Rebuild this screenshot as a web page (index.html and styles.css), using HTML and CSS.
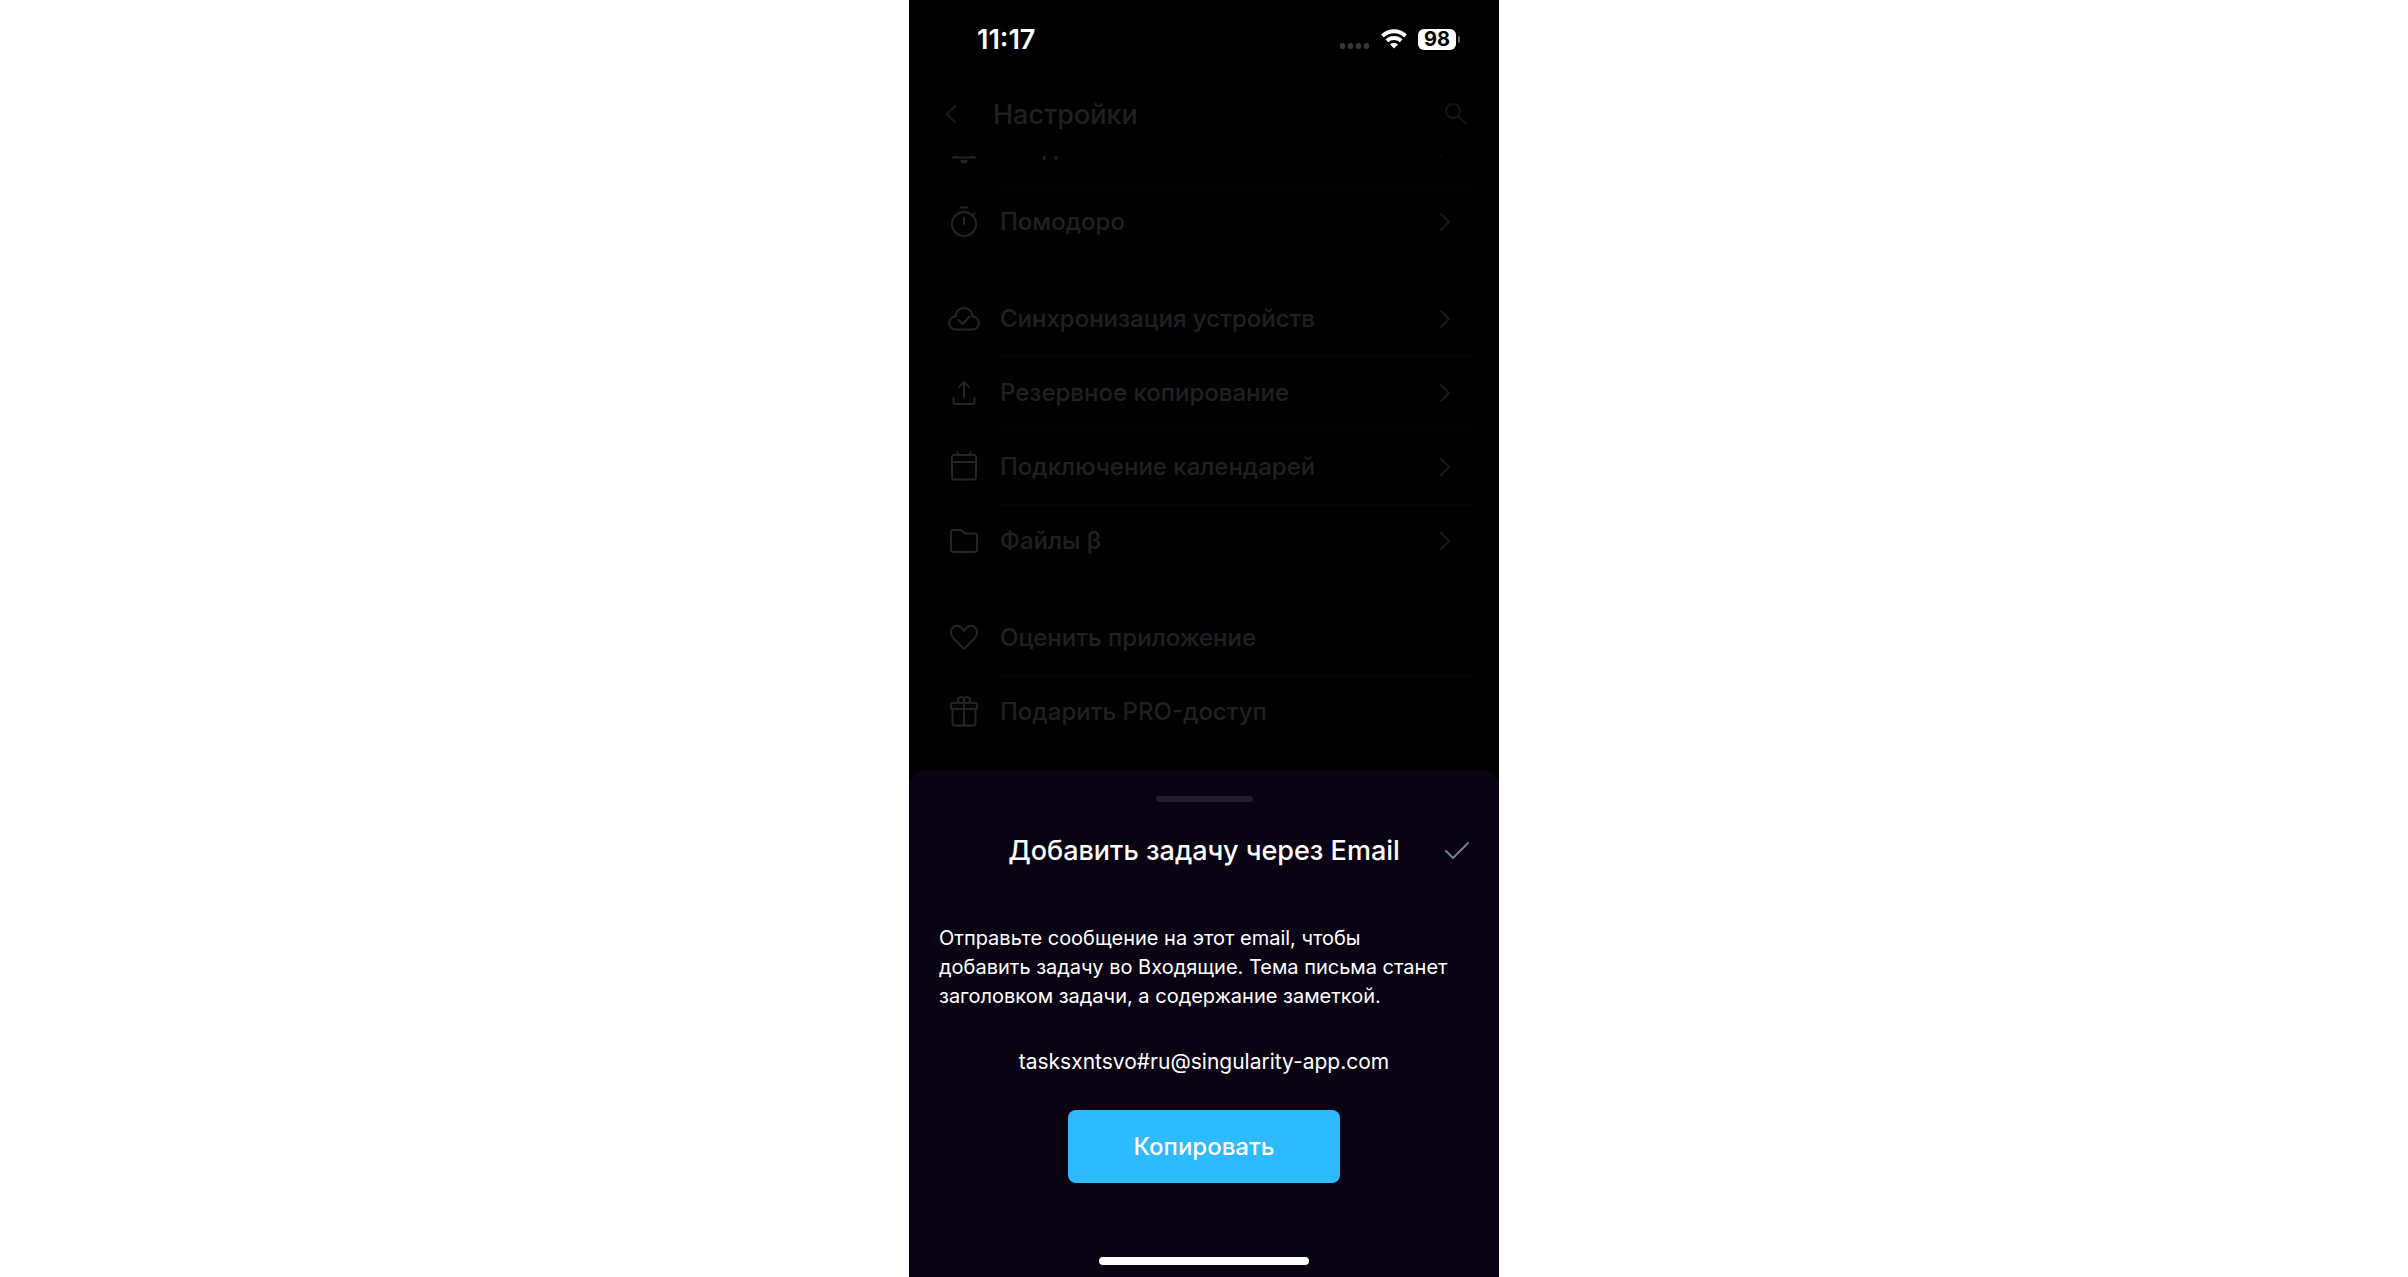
FILE: index.html
```html
<!DOCTYPE html>
<html lang="ru">
<head>
    <meta charset="UTF-8">
    <meta name="viewport" content="width=device-width, initial-scale=1.0">
    <title>Настройки</title>
    <link rel="stylesheet" href="styles.css">
</head>
<body>
    <div class="phone">
        <div class="status-bar">
            <span class="time">11:17</span>
            <div class="status-icons">
                <svg class="signal" viewBox="0 0 30 6"><rect x="0" y="0" width="5" height="6" rx="2"/><rect x="8" y="0" width="5" height="6" rx="2"/><rect x="16" y="0" width="5" height="6" rx="2"/><rect x="24" y="0" width="5" height="6" rx="2"/></svg>
                <svg class="wifi" viewBox="0 0 26 20"><path d="M1.500 7a16.500 16.500 0 0 1 23 0M5.800 11.800a10.500 10.500 0 0 1 14.400 0"/><path class="wifi-dot" d="M13 19.500l-4-4.200a6 6 0 0 1 8 0z"/></svg>
                <span class="battery">98</span>
            </div>
        </div>
        <header class="topbar">
            <button class="icon-button" aria-label="Назад"><svg class="back" viewBox="0 0 12 18"><path d="M10 1L2 9l8 8"/></svg></button>
            <h1>Настройки</h1>
            <button class="icon-button" aria-label="Поиск"><svg class="search" viewBox="0 0 22 22"><circle cx="8" cy="8" r="7"/><path d="M13 13l8 8"/></svg></button>
        </header>
        <main class="settings">
            <div class="group group-scrolled">
                <a class="row" href="#">
                    <svg class="icon" viewBox="0 0 32 32"><path d="M5 25.500h22M8 24V13a8 8 0 0 1 16 0v11"/><path class="fill" d="M12.500 28h7a3.500 3.500 0 0 1-7 0z"/></svg>
                    <span class="label">Уведомления</span>
                    <svg class="chevron" viewBox="0 0 12 18"><path d="M2 1l8 8-8 8"/></svg>
                </a>
                <a class="row" href="#">
                    <svg class="icon" viewBox="0 0 32 32"><circle cx="16" cy="18" r="12"/><path d="M12.500 1.500h7M16 12v6M24.500 9.500l2-2"/></svg>
                    <span class="label">Помодоро</span>
                    <svg class="chevron" viewBox="0 0 12 18"><path d="M2 1l8 8-8 8"/></svg>
                </a>
            </div>
            <div class="group">
                <a class="row" href="#">
                    <svg class="icon" viewBox="0 0 32 32"><path d="M7.500 26.500a6.500 6.500 0 0 1 0-13C8 8 11.500 5 16 5s8 3 8.500 8.500a6.500 6.500 0 0 1 0 13z"/><path d="M10.500 17l4 4 7-7.500"/></svg>
                    <span class="label">Синхронизация устройств</span>
                    <svg class="chevron" viewBox="0 0 12 18"><path d="M2 1l8 8-8 8"/></svg>
                </a>
                <a class="row" href="#">
                    <svg class="icon" viewBox="0 0 32 32"><path d="M16 20V5M11 10l5-5 5 5M5.500 21v4a2 2 0 0 0 2 2h17a2 2 0 0 0 2-2v-4"/></svg>
                    <span class="label">Резервное копирование</span>
                    <svg class="chevron" viewBox="0 0 12 18"><path d="M2 1l8 8-8 8"/></svg>
                </a>
                <a class="row" href="#">
                    <svg class="icon" viewBox="0 0 32 32"><rect x="4" y="4" width="24" height="24.500" rx="2"/><path d="M4 11h24M9.500 4V1M22.500 4V1"/></svg>
                    <span class="label">Подключение календарей</span>
                    <svg class="chevron" viewBox="0 0 12 18"><path d="M2 1l8 8-8 8"/></svg>
                </a>
                <a class="row" href="#">
                    <svg class="icon" viewBox="0 0 32 32"><path d="M5 5h7.500q1 0 1.700.7L17 8.500h10a2 2 0 0 1 2 2V25a2 2 0 0 1-2 2H5a2 2 0 0 1-2-2V7a2 2 0 0 1 2-2z"/></svg>
                    <span class="label">Файлы β</span>
                    <svg class="chevron" viewBox="0 0 12 18"><path d="M2 1l8 8-8 8"/></svg>
                </a>
            </div>
            <div class="group">
                <a class="row" href="#">
                    <svg class="icon" viewBox="0 0 32 32"><path d="M16 27L5.500 16.500C2 12.500 2 7 6 4.500c4-2 7.500.3 10 4.500 2.500-4.200 6-6.500 10-4.500 4 2.500 4 8 .5 12z"/></svg>
                    <span class="label">Оценить приложение</span>
                </a>
                <a class="row" href="#">
                    <svg class="icon" viewBox="0 0 32 32"><rect x="3" y="7" width="26" height="6" rx="1"/><path d="M4.500 13v14.500a2 2 0 0 0 2 2h19a2 2 0 0 0 2-2V13M16 7v22"/><circle cx="13" cy="4" r="3"/><circle cx="19" cy="4" r="3"/></svg>
                    <span class="label">Подарить PRO-доступ</span>
                </a>
            </div>
        </main>
        <section class="sheet">
            <div class="grabber"></div>
            <div class="sheet-header">
                <h2>Добавить задачу через Email</h2>
                <button class="icon-button done" aria-label="Готово"><svg class="check" viewBox="0 0 24 18"><path d="M1 9l7 7L23 1"/></svg></button>
            </div>
            <p class="description">Отправьте сообщение на этот email, чтобы добавить задачу во Входящие. Тема письма станет заголовком задачи, а содержание заметкой.</p>
            <p class="email">tasksxntsvo#ru@singularity-app.com</p>
            <button class="copy">Копировать</button>
            <div class="home-indicator"></div>
        </section>
    </div>
</body>
</html>
```

FILE: styles.css
```css
* {
    box-sizing: border-box;
}
body {
    margin: 0;
    background: #fff;
    font-family: Inter, "Noto Sans", sans-serif;
}
h1, h2, p {
    margin: 0;
}
svg {
    flex: none;
    fill: none;
    stroke: currentColor;
    stroke-width: 2;
    stroke-linecap: round;
    stroke-linejoin: round;
}
.phone {
    max-width: 590px;
    min-height: 100vh;
    margin: 0 auto;
    background: #000;
    color: #202020;
    display: flex;
    flex-direction: column;
}
.status-bar {
    display: flex;
    align-items: center;
    justify-content: space-between;
    height: 78px;
    padding: 0 43px 0 68px;
    color: #fff;
}
.time {
    font-size: 27px;
    font-weight: 600;
}
.status-icons {
    display: flex;
    align-items: center;
    gap: 11px;
}
.signal {
    width: 30px;
    height: 6px;
    margin-top: 14px;
    fill: #38383a;
    stroke: none;
}
.wifi {
    width: 26px;
    height: 20px;
    stroke-width: 4;
    stroke-linecap: butt;
}
.wifi-dot {
    fill: #fff;
    stroke: none;
}
.battery {
    position: relative;
    width: 38px;
    border-radius: 6px;
    background: #fff;
    color: #000;
    font-size: 20px;
    font-weight: 700;
    line-height: 21px;
    text-align: center;
}
.battery::after {
    content: "";
    position: absolute;
    top: 7px;
    right: -4px;
    width: 2px;
    height: 7px;
    border-radius: 0 2px 2px 0;
    background: #666;
}
.icon-button {
    display: flex;
    padding: 0;
    border: none;
    background: none;
    color: inherit;
    cursor: pointer;
}
.topbar {
    display: flex;
    align-items: center;
    height: 78px;
    padding: 0 32px 6px 36px;
}
.topbar h1 {
    flex: 1;
    padding-left: 36px;
    font-size: 27px;
    font-weight: 500;
}
.back, .chevron {
    width: 12px;
    height: 18px;
    color: #181818;
}
.search {
    width: 22px;
    height: 22px;
    color: #141414;
}
.settings {
    display: flex;
    flex-direction: column;
    gap: 23px;
    padding: 0 24px 22px;
}
.group {
    border-radius: 12px;
    background: #010102;
}
/* list is scrolled, the first row goes under the top bar */
.group-scrolled {
    display: flex;
    flex-direction: column;
    justify-content: flex-end;
    height: 103px;
    border-radius: 0 0 12px 12px;
    overflow: hidden;
}
.row {
    position: relative;
    display: flex;
    flex: none;
    align-items: center;
    height: 74px;
    padding: 0 24px 0 15px;
    color: inherit;
    text-decoration: none;
}
.row + .row::before {
    content: "";
    position: absolute;
    top: 0;
    left: 67px;
    right: 0;
    height: 1px;
    background: #060607;
}
.icon {
    width: 32px;
    height: 32px;
    color: #242424;
}
.icon .fill {
    fill: currentColor;
    stroke: none;
}
.label {
    flex: 1;
    padding: 0 0 2px 20px;
    font-size: 24px;
    font-weight: 500;
}
.sheet {
    flex: 1;
    display: flex;
    flex-direction: column;
    align-items: center;
    padding: 25px 30px 12px;
    border-radius: 14px 14px 0 0;
    background: #0a0314;
    color: #fff;
}
.grabber {
    width: 97px;
    height: 6px;
    border-radius: 3px;
    background: #231d2c;
}
.sheet-header {
    position: relative;
    align-self: stretch;
    margin-top: 31px;
    text-align: center;
}
.sheet-header h2 {
    font-size: 27px;
    font-weight: 500;
    line-height: 36px;
}
.done {
    position: absolute;
    top: 9px;
    right: 0;
    color: #6f8293;
}
.check {
    width: 24px;
    height: 18px;
}
.description {
    align-self: stretch;
    margin-top: 55px;
    padding-right: 16px;
    font-size: 20px;
    line-height: 29px;
}
.email {
    margin-top: 36px;
    font-size: 21px;
    line-height: 29px;
}
.copy {
    width: 272px;
    height: 73px;
    margin-top: 34px;
    border: none;
    border-radius: 8px;
    background: #2fb9ff;
    color: #fff;
    font-family: inherit;
    font-size: 24px;
    font-weight: 500;
    cursor: pointer;
}
.home-indicator {
    width: 210px;
    height: 8px;
    margin-top: auto;
    border-radius: 4px;
    background: #fff;
}
```
